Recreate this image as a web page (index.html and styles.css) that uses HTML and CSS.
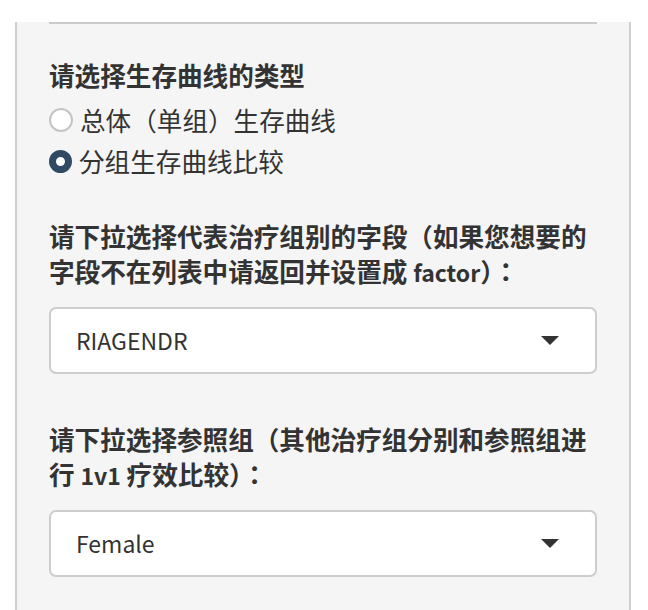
FILE: index.html
```html
<!DOCTYPE html>
<html lang="en">
<head>
  <meta charset="UTF-8">
  <meta name="viewport" content="width=device-width, initial-scale=1.0">
  <title>生存曲线</title>
  <link rel="stylesheet" href="styles.css">
</head>
<body>
  <!-- Sidebar panel with the survival curve options -->
  <div class="well">
    <hr class="divider">

    <!-- Curve type -->
    <div class="form-group group-radio">
      <label class="control-label">请选择生存曲线的类型</label>
      <div class="radio-list">
        <label class="radio">
          <span class="radio-dot"></span>
          <span>总体（单组）生存曲线</span>
        </label>
        <label class="radio checked">
          <span class="radio-dot"></span>
          <span>分组生存曲线比较</span>
        </label>
      </div>
    </div>

    <!-- Group field -->
    <div class="form-group">
      <label class="control-label">请下拉选择代表治疗组别的字段（如果您想要的字段不在列表中请返回并设置成 <span class="latin">factor</span>）：</label>
      <div class="select-box">
        <span class="select-value latin">RIAGENDR</span>
        <span class="caret"></span>
      </div>
    </div>

    <!-- Reference group -->
    <div class="form-group">
      <label class="control-label">请下拉选择参照组（其他治疗组分别和参照组进行 <span class="latin">1v1</span> 疗效比较）：</label>
      <div class="select-box">
        <span class="select-value latin">Female</span>
        <span class="caret"></span>
      </div>
    </div>
  </div>
</body>
</html>
```

FILE: styles.css
```css
/* Page */
body {
  margin: 0;
  padding: 0 17px 0 15px;
  background: #fff;
  color: #333;
  font-family: "Noto Sans CJK JP", "Noto Sans", sans-serif;
  font-size: 25.6px;
  height: 610px;
  overflow: hidden;
}

/* Latin glyphs of the CJK font run large, bring them back to body size */
.latin {
  font-size: 23px;
  line-height: 1;
}

/* Sidebar well (cropped: only the sides show) */
.well {
  background-color: #f5f5f5;
  border-left: 2px solid #cfcfcf;
  border-right: 2px solid #cfcfcf;
  padding: 0 32px 32px;
  min-height: 610px;
  box-sizing: border-box;
}

.divider {
  border: none;
  height: 2px;
  background-color: #cbcbcb;
  margin: 22px 0 33px;
}

/* Inputs */
.form-group {
  margin-bottom: 47px;
}

.form-group:last-child {
  margin-bottom: 0;
}

.group-radio {
  margin-bottom: 39px;
}

.control-label {
  display: block;
  font-weight: bold;
  line-height: 35px;
}

.radio-list {
  margin-top: 10px;
  display: flex;
  flex-direction: column;
  gap: 5px;
}

.radio {
  display: flex;
  align-items: center;
  gap: 7px;
  line-height: 36px;
}

.radio-dot {
  width: 20px;
  height: 20px;
  border: 2px solid #c4c4c4;
  border-radius: 50%;
  background: #fff;
  flex-shrink: 0;
}

.radio.checked .radio-dot {
  width: 9px;
  height: 9px;
  border: 7.5px solid #2f4a62;
}

/* Selectize-like dropdown */
.select-box {
  margin-top: 19px;
  height: 67px;
  box-sizing: border-box;
  border: 2px solid #cdcdcd;
  border-radius: 7px;
  background: #fff;
  display: flex;
  align-items: center;
  justify-content: space-between;
  padding: 0 36px 0 25px;
}

.caret {
  width: 0;
  height: 0;
  border-left: 9px solid transparent;
  border-right: 9px solid transparent;
  border-top: 9px solid #333;
}
```
